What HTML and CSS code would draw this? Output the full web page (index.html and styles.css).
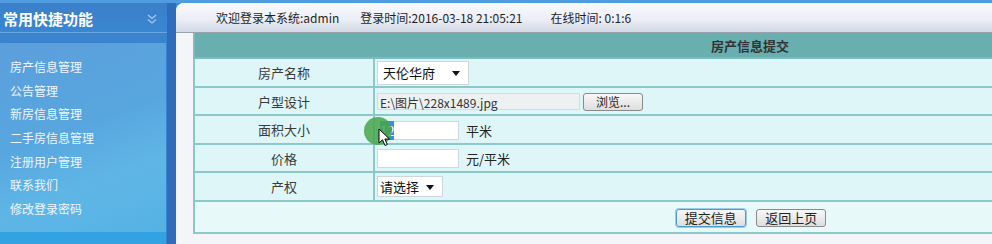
FILE: index.html
```html
<!doctype html>
<html lang="zh-CN">
<head>
<meta charset="utf-8">
<title>房产信息提交</title>
<link rel="stylesheet" href="styles.css">
</head>
<body>

<div class="frame">
	<div class="side">
		<div class="side-head">
			<span class="side-title">常用快捷功能</span>
			<svg class="side-fold" width="12" height="12" viewBox="0 0 12 12"><path d="M2 2 L6 5.5 L10 2 M2 6.5 L6 10 L10 6.5" fill="none" stroke="#a6caee" stroke-width="1.3"/></svg>
		</div>
		<ul class="side-menu">
			<li>房产信息管理</li>
			<li>公告管理</li>
			<li>新房信息管理</li>
			<li>二手房信息管理</li>
			<li>注册用户管理</li>
			<li>联系我们</li>
			<li>修改登录密码</li>
		</ul>
		<div class="side-foot"></div>
	</div>

	<div class="split"></div>

	<div class="main">
		<div class="topbar">
			<span class="welcome">欢迎登录本系统:admin</span>
			<span class="login-time">登录时间:2016-03-18 21:05:21</span>
			<span>在线时间: 0:1:6</span>
		</div>

		<div class="content">
			<table class="form">
				<tr class="head"><th colspan="2">房产信息提交</th></tr>
				<tr class="r1">
					<td class="label">房产名称</td>
					<td><span class="sel-wrap"><select class="sel sel-name"><option>天伦华府</option></select></span></td>
				</tr>
				<tr class="r2">
					<td class="label">户型设计</td>
					<td><span class="file-box">E:\图片\228x1489.jpg</span><button type="button" class="btn btn-browse">浏览...</button></td>
				</tr>
				<tr class="r3">
					<td class="label">面积大小</td>
					<td><span class="txt"><span class="picked">12</span></span><span class="unit">平米</span></td>
				</tr>
				<tr class="r4">
					<td class="label">价格</td>
					<td><span class="txt"></span><span class="unit">元/平米</span></td>
				</tr>
				<tr class="r5">
					<td class="label">产权</td>
					<td><span class="sel-wrap"><select class="sel sel-own"><option>请选择</option></select></span></td>
				</tr>
				<tr class="r6">
					<td colspan="2" class="actions">
						<button type="button" class="btn btn-act btn-main">提交信息</button>
						<button type="button" class="btn btn-act">返回上页</button>
					</td>
				</tr>
			</table>
		</div>
	</div>
</div>

<div class="click-mark">
	<svg width="14" height="20" viewBox="0 0 14 20"><path d="M1 1 L1 15 L4.5 11.8 L7 17.5 L9.3 16.5 L6.9 11 L11.5 11 Z" fill="#fff" stroke="#000" stroke-width="1"/></svg>
</div>

</body>
</html>
```

FILE: styles.css
```css
html, body {
	margin: 0;
	padding: 0;
}

body {
	width: 992px;
	height: 244px;
	overflow: hidden;
	background: #3d8ad4;
	font-family: "Noto Sans CJK SC", "DejaVu Sans", sans-serif;
	font-size: 12px;
	color: #222;
	position: relative;
}

.frame {
	display: flex;
	height: 244px;
	border-top: 3px solid #4f9ce0;
	box-sizing: border-box;
}

/* left menu */
.side {
	width: 167px;
	flex: none;
	display: flex;
	flex-direction: column;
	background: #3a84cf;
}

.side-head {
	height: 30px;
	display: flex;
	align-items: center;
	justify-content: space-between;
	padding: 2px 9px 0 3px;
	box-sizing: border-box;
	background: linear-gradient(#3b7fc9, #3a86d0);
	border-bottom: 1px solid #6aa6e0;
}

.side-title {
	color: #fff;
	font-size: 15px;
	font-weight: bold;
}

.side-menu {
	list-style: none;
	margin: 10px 1px 0 0;
	padding: 12px 0 0 10px;
	height: 177px;
	background: linear-gradient(160deg, #5c9fdc 0%, #58a6df 45%, #5fb6e6 70%, #55b2e4 100%);
}

.side-menu li {
	color: #eef5ff;
	font-size: 12px;
	line-height: 23.7px;
	height: 23.7px;
}

.side-foot {
	flex: 1;
	background: #33a2e2;
	margin-right: 1px;
}

.split {
	width: 9px;
	flex: none;
	background: #2f6cbc;
}

/* right panel */
.main {
	flex: 1;
	min-width: 0;
	display: flex;
	flex-direction: column;
	background: #f4f5f9;
	border-top-left-radius: 8px;
	overflow: hidden;
}

.topbar {
	height: 29px;
	flex: none;
	display: flex;
	align-items: center;
	padding-left: 40px;
	background: linear-gradient(#f9fafd, #eceff7 55%, #d3d9e7);
	border-bottom: 1px solid #9aa2ad;
	font-size: 12px;
	color: #1f1f1f;
}

.welcome {
	margin-right: 21px;
}

.login-time {
	margin-right: 28px;
}

.content {
	padding-left: 17px;
}

.form {
	width: 1114px;
	border-collapse: collapse;
	background: #dff6f8;
}

.form td, .form th {
	border: 2px solid #8bc8ca;
	padding: 0;
}

.form .head th {
	height: 24px;
	background: #69afb0;
	border-top: 0;
	border-color: #7dbcbd;
	font-size: 13px;
	font-weight: bold;
	color: #333;
	text-align: center;
}

.form .label {
	width: 178px;
	text-align: center;
	font-size: 13px;
	color: #3a3a3a;
}

.form td:not(.label) {
	padding-left: 2px;
}

.r1 td { height: 27px; }
.r2 td { height: 26px; }
.r3 td { height: 27px; }
.r4 td { height: 26px; }
.r5 td { height: 27px; }
.r6 td { height: 30px; background: #e8f9f9; }

.sel-wrap {
	position: relative;
	display: inline-block;
	vertical-align: middle;
}

.sel-wrap::after {
	content: "";
	position: absolute;
	right: 9px;
	top: 50%;
	margin-top: -2px;
	border-left: 4px solid transparent;
	border-right: 4px solid transparent;
	border-top: 5px solid #111;
	pointer-events: none;
}

.sel {
	appearance: none;
	-webkit-appearance: none;
	display: block;
	font-family: inherit;
	font-size: 13px;
	color: #111;
	background: #fff;
	border: 1px solid #cdd6da;
	padding: 0 0 0 5px;
	margin: 0;
}

.sel-name {
	width: 92px;
	height: 24px;
}

.sel-own {
	width: 66px;
	height: 21px;
	padding-left: 2px;
}

.file-box {
	display: inline-block;
	width: 203px;
	height: 17px;
	line-height: 17px;
	box-sizing: border-box;
	padding-left: 2px;
	background: #eef1f2;
	border: 1px solid #d8dcde;
	font-size: 12px;
	color: #333;
	vertical-align: middle;
}

.btn {
	font-family: inherit;
	font-size: 12px;
	color: #222;
	background: linear-gradient(#f8f8f8, #dedede);
	border: 1px solid #8a8a8a;
	border-radius: 3px;
	padding: 0;
	vertical-align: middle;
}

.btn-browse {
	width: 60px;
	height: 18px;
	margin-left: 3px;
	line-height: 14px;
}

.txt {
	display: inline-block;
	width: 82px;
	height: 19px;
	box-sizing: border-box;
	background: #fff;
	border: 1px solid #d0d8dc;
	vertical-align: middle;
	padding: 1px 0 0 2px;
	font-size: 13px;
	line-height: 15px;
}

.picked {
	background: #3a8fd8;
	color: #fff;
}

.unit {
	margin-left: 7px;
	font-size: 13px;
	color: #222;
	vertical-align: middle;
}

.actions {
	text-align: center;
}

.btn-act {
	width: 70px;
	height: 18px;
	font-size: 13px;
	line-height: 14px;
	margin: 0 4px;
}

.btn-main {
	border-color: #4a9ad0;
	box-shadow: 0 0 0 1px #9ccbe8;
}

/* click highlight left by the screen recorder */
.click-mark {
	position: absolute;
	left: 364px;
	top: 117px;
	width: 28px;
	height: 28px;
	border-radius: 50%;
	background: rgba(70, 165, 75, 0.85);
}

.click-mark svg {
	position: absolute;
	left: 14px;
	top: 11px;
}
```
